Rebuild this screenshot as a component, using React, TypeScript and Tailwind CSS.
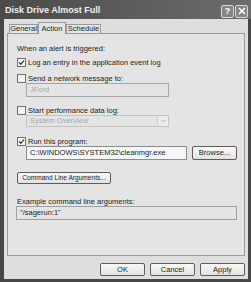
const font = { fontFamily: '"Liberation Sans", Arial, sans-serif' };

function Check({ checked }: { checked?: boolean }) {
  return (
    <span className="w-[9px] h-[9px] shrink-0 border border-[#707070] bg-[#f4f4f4] flex items-center justify-center">
      {checked && (
        <svg width="7" height="7" viewBox="0 0 7 7">
          <path d="M1 3.4 L2.8 5.2 L6 1.6" fill="none" stroke="#3a3a3a" strokeWidth="1.3" />
        </svg>
      )}
    </span>
  );
}

function Btn({ label, className = '' }: { label: string; className?: string }) {
  return (
    <div
      className={`flex items-center justify-center whitespace-nowrap border border-[#5c5c5c] rounded-[2px] bg-gradient-to-b from-[#f8f8f8] to-[#e2e2e2] text-[#1c1c1c] ${className}`}
    >
      {label}
    </div>
  );
}

function TitleButton({ children }: { children: React.ReactNode }) {
  return (
    <div className="w-[13px] h-[13px] border border-[#d8d8d8] rounded-[2px] bg-[#858585] text-white text-[9px] font-bold leading-none flex items-center justify-center">
      {children}
    </div>
  );
}

export default function App() {
  return (
    <div className="w-[251px] h-[282px] bg-[#474747] flex flex-col text-[7.5px] leading-none" style={font}>
      <div className="h-[19px] shrink-0 flex items-center justify-between pl-[5px] pr-[3px] pt-[1px] bg-gradient-to-r from-[#4a4a4a] via-[#5c5c5c] to-[#6c6c6c]">
        <span className="text-[9px] font-bold text-[#f0f0f0]">Disk Drive Almost Full</span>
        <div className="flex gap-[1px] mt-[2px]">
          <TitleButton>?</TitleButton>
          <TitleButton>
            <svg width="8" height="8" viewBox="0 0 8 8">
              <path d="M1 1 L7 7 M7 1 L1 7" stroke="#fff" strokeWidth="1.6" />
            </svg>
          </TitleButton>
        </div>
      </div>

      <div className="flex-1 ml-[4px] mr-[3px] mb-[3px] bg-[#dedede] flex flex-col pt-[3px]">
        <div className="flex items-end h-[11px] ml-[5px] whitespace-nowrap">
          <div className="h-[9px] w-[29px] border border-b-0 border-[#9a9a9a] bg-[#e6e6e6] flex items-center justify-center text-[#1c1c1c]">
            General
          </div>
          <div className="h-[12px] w-[28px] -mb-px relative z-10 border border-b-0 border-[#9a9a9a] bg-[#e4e4e4] flex items-center justify-center text-[#1c1c1c]">
            Action
          </div>
          <div className="h-[9px] w-[35px] border border-b-0 border-[#9a9a9a] bg-[#e6e6e6] flex items-center justify-center text-[#1c1c1c]">
            Schedule
          </div>
        </div>

        <div className="mx-[3px] h-[223px] border border-[#9a9a9a] bg-[#e4e4e4] flex flex-col pl-[9px] text-[#1c1c1c]">
          <div className="mt-[10px] h-[9px] flex items-center">When an alert is triggered:</div>

          <div className="mt-[5px] h-[9px] flex items-center gap-[2px]">
            <Check checked />
            <span>Log an entry in the application event log</span>
          </div>

          <div className="mt-[7px] h-[9px] flex items-center gap-[2px]">
            <Check />
            <span>Send a network message to:</span>
          </div>
          <div className="ml-[9px] w-[143px] h-[14px] border border-[#a6a6a6] flex items-center pl-[3px] text-[#a8a8a8]">
            JFord
          </div>

          <div className="mt-[9px] h-[9px] flex items-center gap-[2px]">
            <Check />
            <span>Start performance data log:</span>
          </div>
          <div className="ml-[9px] w-[143px] h-[12px] border border-[#c4c4c4] flex items-center justify-between text-[#a8a8a8]">
            <span className="pl-[3px]">System Overview</span>
            <span className="w-[11px] h-full border-l border-[#d0d0d0] bg-[#ececec] flex items-center justify-center">
              <svg width="5" height="4" viewBox="0 0 5 4">
                <path d="M0.5 1 L2.5 3 L4.5 1" fill="none" stroke="#b0b0b0" strokeWidth="1" />
              </svg>
            </span>
          </div>

          <div className="mt-[10px] h-[9px] flex items-center gap-[2px]">
            <Check checked />
            <span>Run this program:</span>
          </div>
          <div className="flex items-center">
            <div className="ml-[9px] w-[161px] h-[14px] border border-[#8c8c8c] bg-[#f6f6f6] flex items-center pl-[3px]">
              C:\WINDOWS\SYSTEM32\cleanmgr.exe
            </div>
            <Btn label="Browse..." className="ml-[5px] w-[45px] h-[14px]" />
          </div>

          <Btn label="Command Line Arguments..." className="mt-[12px] w-[94px] h-[12px] text-[6.6px]" />

          <div className="mt-[13px] h-[9px] flex items-center">Example command line arguments:</div>
          <div className="-ml-px w-[221px] h-[14px] border border-[#a0a0a0] flex items-center pl-[3px]">
            "/sagerun:1"
          </div>
        </div>

        <div className="flex justify-end gap-[5px] pr-[3px] mt-[7px]">
          <Btn label="OK" className="w-[45px] h-[13px]" />
          <Btn label="Cancel" className="w-[45px] h-[13px]" />
          <Btn label="Apply" className="w-[45px] h-[13px]" />
        </div>
      </div>
    </div>
  );
}
